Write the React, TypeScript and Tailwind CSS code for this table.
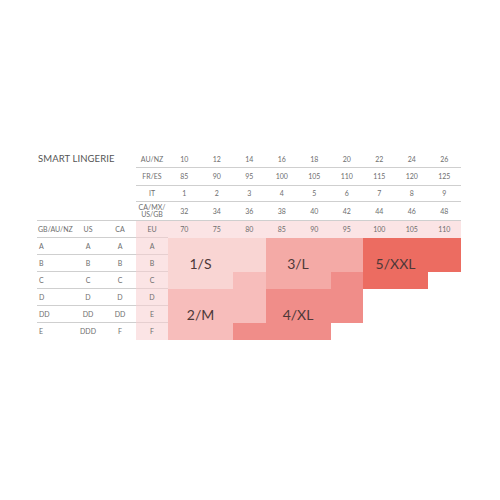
import React from 'react';

const sizesAU = ['10', '12', '14', '16', '18', '20', '22', '24', '26'];
const sizesFR = ['85', '90', '95', '100', '105', '110', '115', '120', '125'];
const sizesIT = ['1', '2', '3', '4', '5', '6', '7', '8', '9'];
const sizesCA = ['32', '34', '36', '38', '40', '42', '44', '46', '48'];
const sizesEU = ['70', '75', '80', '85', '90', '95', '100', '105', '110'];

const cups = [
  ['A', 'A', 'A', 'A'],
  ['B', 'B', 'B', 'B'],
  ['C', 'C', 'C', 'C'],
  ['D', 'D', 'D', 'D'],
  ['DD', 'DD', 'DD', 'E'],
  ['E', 'DDD', 'F', 'F'],
];

// 0 = empty, 1..5 = garment size
const fit = [
  [1, 1, 1, 3, 3, 3, 5, 5, 5],
  [1, 1, 1, 3, 3, 3, 5, 5, 5],
  [1, 1, 2, 3, 3, 4, 5, 5, 0],
  [2, 2, 2, 4, 4, 4, 0, 0, 0],
  [2, 2, 2, 4, 4, 4, 0, 0, 0],
  [2, 2, 4, 4, 4, 0, 0, 0, 0],
];

const fitColor = ['bg-white', 'bg-[#f9d5d3]', 'bg-[#f7bdbb]', 'bg-[#f4aaa6]', 'bg-[#f08d89]', 'bg-[#ec6c61]'];

const cols = 'grid-cols-[35px_32px_32px_32px_repeat(9,32.5px)]';

function HeaderRow({ label, values, tall }: { label: string; values: string[]; tall?: boolean }) {
  return (
    <>
      <div className="flex items-center justify-center text-center leading-[7px] border-b border-[#cfcfcf]">
        {tall ? (
          <span>
            CA/MX/
            <br />
            US/GB
          </span>
        ) : (
          label
        )}
      </div>
      {values.map((v) => (
        <div key={v} className="flex items-center justify-center border-b border-[#cfcfcf]">
          {v}
        </div>
      ))}
    </>
  );
}

export default function App() {
  return (
    <div className="w-[500px] h-[500px] bg-white pt-[151px] pl-[37px] font-['Lato',sans-serif] text-[#6e6e6e]">
      {/* Top header rows */}
      <div className={`grid ${cols} grid-rows-[17px_18px_16px_19px_17px] text-[7px]`}>
        <div className="col-span-3 flex items-center pl-[1px] text-[9.5px] text-[#555] tracking-[0.1px]">SMART LINGERIE</div>
        <HeaderRow label="AU/NZ" values={sizesAU} />
        <div className="col-span-3" />
        <HeaderRow label="FR/ES" values={sizesFR} />
        <div className="col-span-3" />
        <HeaderRow label="IT" values={sizesIT} />
        <div className="col-span-3 border-b border-[#cfcfcf]" />
        <HeaderRow label="CA/MX/US/GB" values={sizesCA} tall />

        <div className="flex items-center pl-[1px] border-b border-[#cfcfcf]">GB/AU/NZ</div>
        <div className="flex items-center justify-center border-b border-[#cfcfcf]">US</div>
        <div className="flex items-center justify-center border-b border-[#cfcfcf]">CA</div>
        <div className="flex items-center justify-center bg-[#fbe4e5] border-b border-[#e6cfd0]">EU</div>
        {sizesEU.map((v) => (
          <div key={v} className="flex items-center justify-center bg-[#fbe4e5]">
            {v}
          </div>
        ))}
      </div>

      {/* Cup rows + fit chart */}
      <div className="flex text-[7px]">
        <div className="grid grid-cols-[35px_32px_32px_32px] grid-rows-[repeat(6,17px)]">
          {cups.map((row, r) =>
            row.map((c, i) => (
              <div
                key={`${r}-${i}`}
                className={`flex items-center ${i === 0 ? 'pl-[2px]' : 'justify-center'} ${
                  i === 3 ? 'bg-[#fbe4e5]' : ''
                } ${r < 5 ? (i === 3 ? 'border-b border-[#e6cfd0]' : 'border-b border-[#cfcfcf]') : ''}`}
              >
                {c}
              </div>
            ))
          )}
        </div>

        <div className="grid w-[292.5px]">
          <div className="[grid-area:1/1] grid grid-cols-9 grid-rows-[repeat(6,17px)]">
            {fit.map((row, r) => row.map((s, i) => <div key={`${r}-${i}`} className={fitColor[s]} />))}
          </div>
          <div className="[grid-area:1/1] grid grid-cols-9 grid-rows-[repeat(6,17px)] text-[14px] text-[#4d3838]">
            <div className="col-start-1 col-span-2 row-start-1 row-span-3 flex items-center justify-center">1/S</div>
            <div className="col-start-4 col-span-2 row-start-1 row-span-3 flex items-center justify-center">3/L</div>
            <div className="col-start-7 col-span-2 row-start-1 row-span-3 flex items-center justify-center">5/XXL</div>
            <div className="col-start-1 col-span-2 row-start-4 row-span-3 flex items-center justify-center">2/M</div>
            <div className="col-start-4 col-span-2 row-start-4 row-span-3 flex items-center justify-center">4/XL</div>
          </div>
        </div>
      </div>
    </div>
  );
}
